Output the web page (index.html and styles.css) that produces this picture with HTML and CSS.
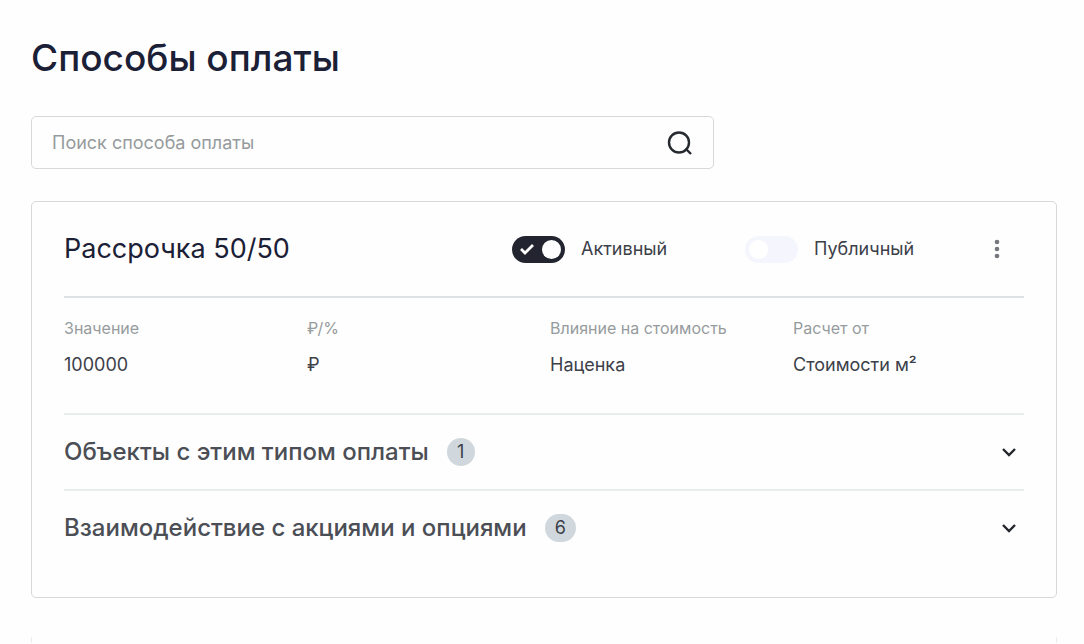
FILE: index.html
```html
<!DOCTYPE html>
<html lang="ru">
<head>
    <meta charset="UTF-8">
    <meta name="viewport" content="width=device-width, initial-scale=1.0">
    <title>Способы оплаты</title>
    <link rel="stylesheet" href="styles.css">
</head>
<body>
    <main class="page">
        <h1 class="title">Способы оплаты</h1>

        <form class="search" role="search">
            <input type="search" class="search-input" placeholder="Поиск способа оплаты" aria-label="Поиск способа оплаты">
            <button type="submit" class="icon-button" aria-label="Найти">
                <svg width="28" height="28" viewBox="0 0 28 28" fill="none" stroke="#262a30" stroke-width="2.4">
                    <circle cx="14" cy="13.5" r="10"/>
                    <path d="M20.5 19.5l5.5 5.5"/>
                </svg>
            </button>
        </form>

        <section class="card">
            <header class="card-header">
                <h2 class="card-title">Рассрочка 50/50</h2>
                <label class="toggle">
                    <input type="checkbox" class="toggle-input" checked>
                    <span class="toggle-track">
                        <svg class="toggle-check" width="14" height="12" viewBox="0 0 14 12" fill="none" stroke="#fff" stroke-width="2.8">
                            <path d="M1 6l4 4 8-8"/>
                        </svg>
                        <span class="toggle-knob"></span>
                    </span>
                    Активный
                </label>
                <label class="toggle">
                    <input type="checkbox" class="toggle-input">
                    <span class="toggle-track"><span class="toggle-knob"></span></span>
                    Публичный
                </label>
                <button type="button" class="icon-button" aria-label="Меню">
                    <svg width="6" height="20" viewBox="0 0 6 20" fill="#74777b">
                        <circle cx="3" cy="3" r="2.3"/>
                        <circle cx="3" cy="10" r="2.3"/>
                        <circle cx="3" cy="17" r="2.3"/>
                    </svg>
                </button>
            </header>

            <dl class="params">
                <div class="param">
                    <dt>Значение</dt>
                    <dd>100000</dd>
                </div>
                <div class="param">
                    <dt>₽/%</dt>
                    <dd>₽</dd>
                </div>
                <div class="param">
                    <dt>Влияние на стоимость</dt>
                    <dd>Наценка</dd>
                </div>
                <div class="param">
                    <dt>Расчет от</dt>
                    <dd>Стоимости м²</dd>
                </div>
            </dl>

            <button type="button" class="accordion" aria-expanded="false">
                <span>Объекты с этим типом оплаты</span>
                <span class="badge">1</span>
                <svg class="chevron" width="14" height="10" viewBox="0 0 14 10" fill="none" stroke="#23262b" stroke-width="2.4">
                    <path d="M1 2l6 6 6-6"/>
                </svg>
            </button>
            <button type="button" class="accordion" aria-expanded="false">
                <span>Взаимодействие с акциями и опциями</span>
                <span class="badge">6</span>
                <svg class="chevron" width="14" height="10" viewBox="0 0 14 10" fill="none" stroke="#23262b" stroke-width="2.4">
                    <path d="M1 2l6 6 6-6"/>
                </svg>
            </button>
        </section>

        <section class="card-next"></section>
    </main>
</body>
</html>
```

FILE: styles.css
```css
:root {
    --dark: #1b2036;
    --text: #3c4048;
    --muted: #969b9d;
    --border: #d5d9dc;
    --line: #e9edee;
}

* {
    margin: 0;
    padding: 0;
    box-sizing: border-box;
}

body {
    background: #fefefe;
    color: var(--text);
    font-family: Inter, Roboto, sans-serif;
    font-size: 18px;
    line-height: 24px;
}

button,
input {
    font: inherit;
    color: inherit;
    border: none;
    background: none;
}

button {
    cursor: pointer;
}

svg {
    display: block;
}

.page {
    padding: 32px 27px 0 31px;
}

.title {
    color: var(--dark);
    font-size: 37px;
    font-weight: 500;
    line-height: 52px;
    margin-bottom: 32px;
}

.search {
    display: flex;
    align-items: center;
    width: 66.6%;
    height: 53px;
    padding: 0 20px;
    margin-bottom: 32px;
    border: 1px solid var(--border);
    border-radius: 5px;
}

.search-input {
    flex: 1;
    min-width: 0;
    outline: none;
}

.search-input::placeholder {
    color: var(--muted);
    opacity: 1;
}

.icon-button {
    display: flex;
    justify-content: center;
}

.card {
    padding: 0 32px 32px;
    border: 1px solid var(--border);
    border-radius: 5px;
}

.card-header {
    display: grid;
    grid-template-columns: 448px 233px 1fr 54px;
    align-items: center;
    height: 96px;
    border-bottom: 2px solid #dde1e3;
}

.card-title {
    color: var(--dark);
    font-size: 27px;
    font-weight: 400;
}

.toggle {
    display: flex;
    align-items: center;
    gap: 16px;
    cursor: pointer;
}

.toggle-input {
    position: absolute;
    opacity: 0;
}

.toggle-track {
    display: flex;
    align-items: center;
    width: 53px;
    height: 27px;
    padding: 0 4px;
    border-radius: 14px;
    background: #f5f6fd;
}

.toggle-input:checked + .toggle-track {
    background: #22252f;
    justify-content: space-between;
    padding-left: 8px;
}

.toggle-knob {
    width: 19px;
    height: 19px;
    border-radius: 50%;
    background: #fff;
}

.params {
    display: grid;
    grid-template-columns: repeat(4, 1fr);
    gap: 12px;
    padding: 18px 0 36px;
}

.param dt {
    color: var(--muted);
    font-size: 16px;
    margin-bottom: 13px;
}

.accordion {
    display: flex;
    align-items: center;
    width: 100%;
    height: 76px;
    gap: 18px;
    padding-right: 8px;
    border-top: 2px solid var(--line);
    color: #4b4e55;
    font-size: 24px;
    font-weight: 500;
    text-align: left;
}

.badge {
    min-width: 28px;
    padding: 2px 10px;
    border-radius: 14px;
    background: #d0d8dd;
    color: var(--text);
    font-size: 18px;
    font-weight: 400;
    text-align: center;
}

.chevron {
    margin-left: auto;
}

.card-next {
    height: 6px;
    margin-top: 39px;
    border: solid var(--line);
    border-width: 0 1px;
}
```
